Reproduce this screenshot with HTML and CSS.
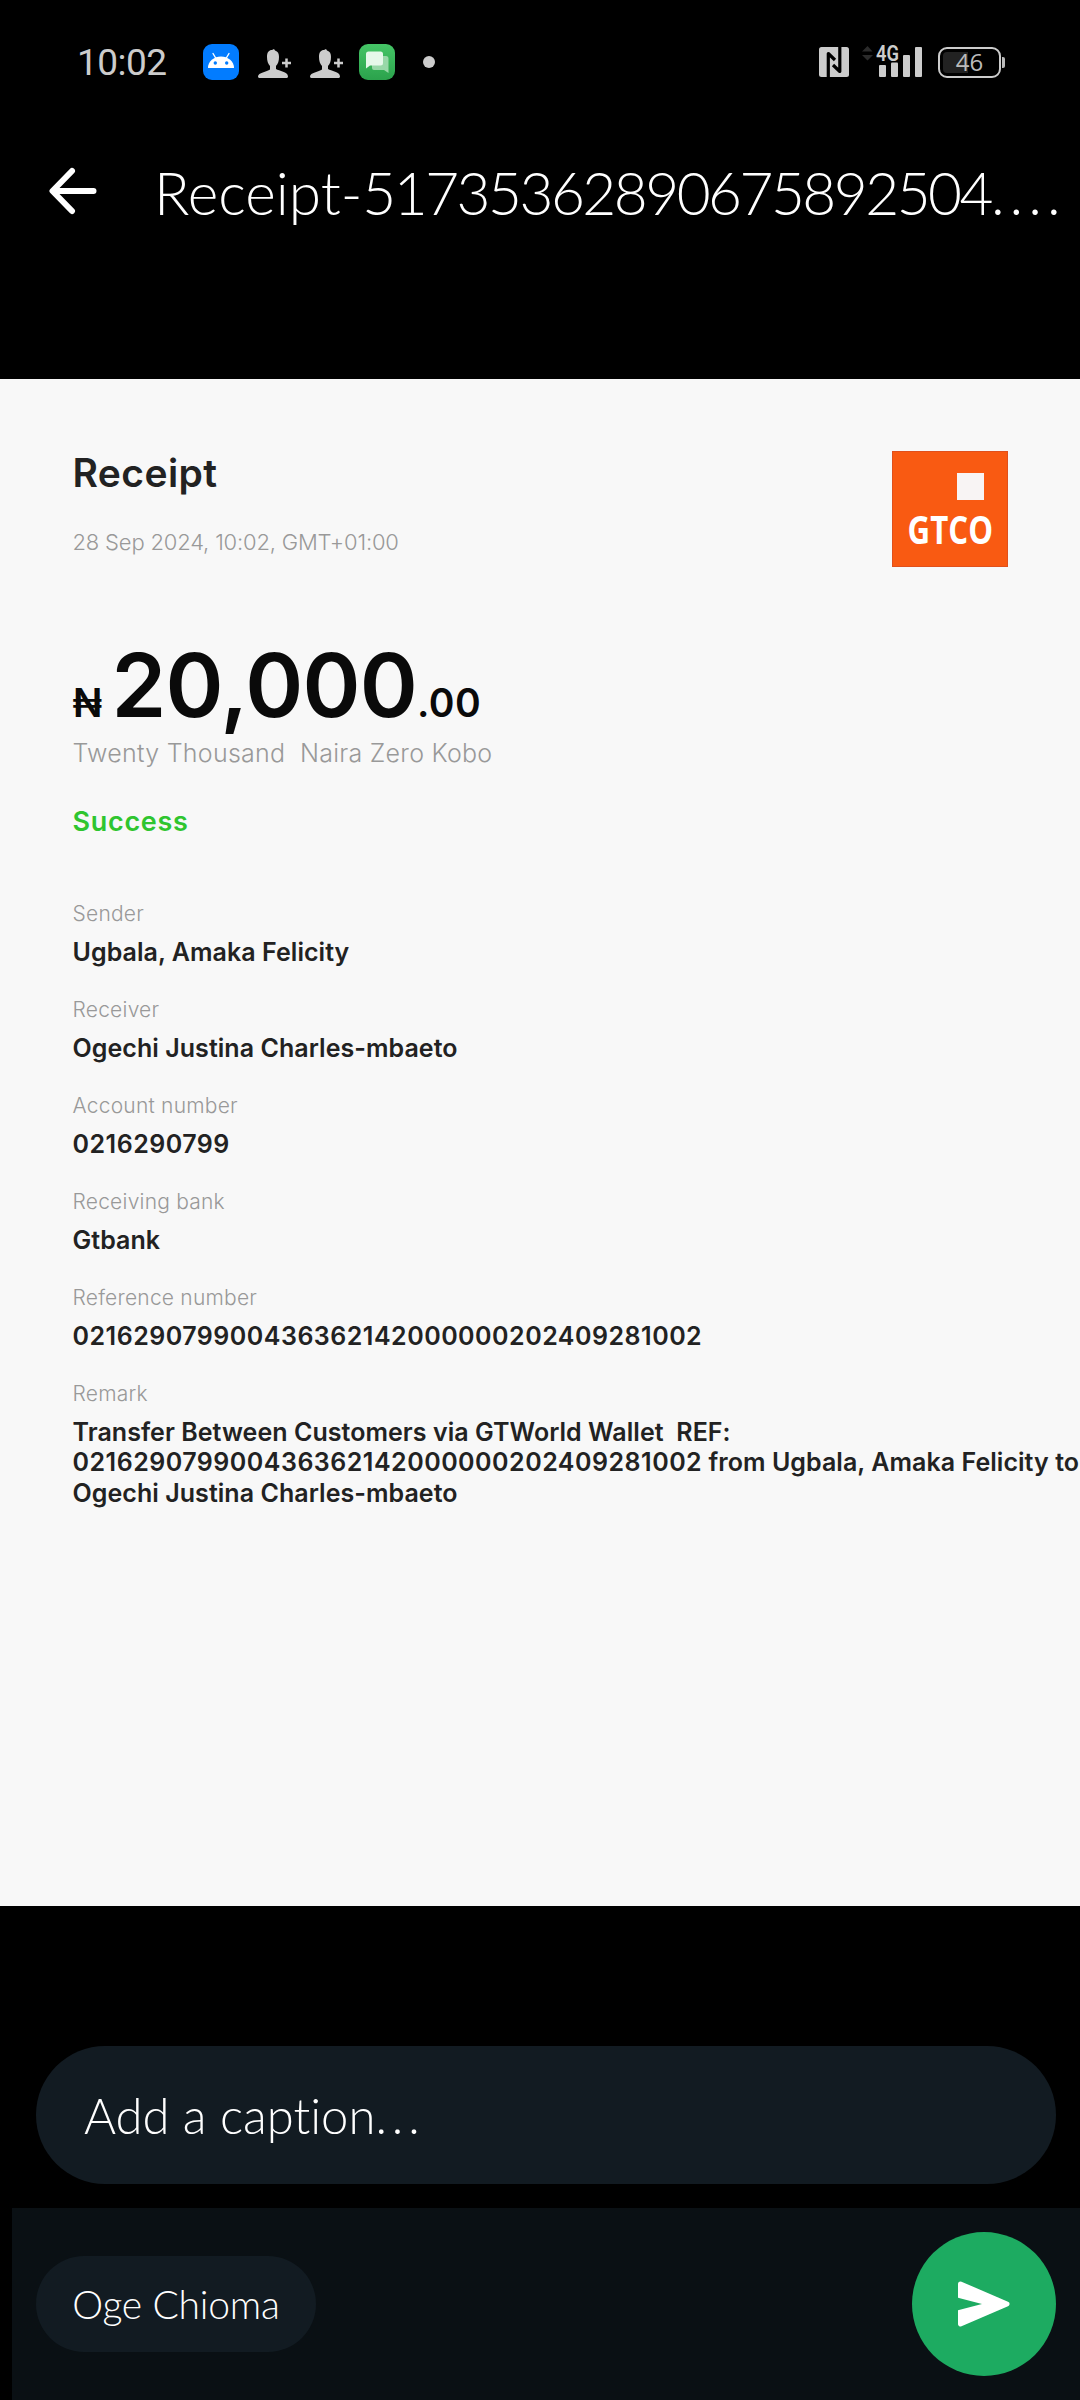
FILE: index.html
```html
<!DOCTYPE html>
<html lang="en">
<head>
    <meta charset="UTF-8">
    <meta name="viewport" content="width=device-width, initial-scale=1.0">
    <title>Receipt</title>
    <link rel="stylesheet" href="styles.css">
</head>
<body>

<div class="status-bar">
    <span class="time">10:02</span>
    <svg class="app-icon" width="36" height="36" viewBox="0 0 36 36">
        <rect width="36" height="36" rx="9" fill="#027cff"/>
        <path d="M10 9.500l3 5M26 9.500l-3 5" stroke="#fff" stroke-width="1.400" stroke-linecap="round"/>
        <path d="M5 24a13 11.500 0 0 1 26 0z" fill="#fff"/>
        <circle cx="12.300" cy="19" r="1.700" fill="#027cff"/>
        <circle cx="23.700" cy="19" r="1.700" fill="#027cff"/>
    </svg>
    <svg class="contact" width="34" height="36" viewBox="0 0 34 36">
        <path d="M9 13c0-5 2-7 5-7l2-1 1 1.500c3 1 4 3 4 6.500 0 4-1 7-3 9v3c3 2 12 2.500 12 7.500 0 1-1 1.500-2 1.500H2c-1 0-2-.5-2-1.500C0 28.500 9 28 12 25.500V22c-2-2-3-5-3-9z" fill="#ccc"/>
        <path d="M28.500 14.500v9M24 19h9" stroke="#ccc" stroke-width="2.500"/>
    </svg>
    <svg class="contact second" width="34" height="36" viewBox="0 0 34 36">
        <path d="M9 13c0-5 2-7 5-7l2-1 1 1.500c3 1 4 3 4 6.500 0 4-1 7-3 9v3c3 2 12 2.500 12 7.500 0 1-1 1.500-2 1.500H2c-1 0-2-.5-2-1.500C0 28.500 9 28 12 25.500V22c-2-2-3-5-3-9z" fill="#ccc"/>
        <path d="M28.500 14.500v9M24 19h9" stroke="#ccc" stroke-width="2.500"/>
    </svg>
    <svg class="messages" width="36" height="36" viewBox="0 0 36 36">
        <defs>
            <linearGradient id="green" x1="0" y1="0" x2="0" y2="1">
                <stop offset="0" stop-color="#45c566"/>
                <stop offset="1" stop-color="#2ba24c"/>
            </linearGradient>
        </defs>
        <rect width="36" height="36" rx="9" fill="url(#green)"/>
        <path d="M15 12h12a2.500 2.500 0 0 1 2.500 2.500V29L25 26H15a2 2 0 0 1-2-2V14a2 2 0 0 1 2-2z" fill="#98d8a8"/>
        <path d="M9.500 7.500h12a2.500 2.500 0 0 1 2.500 2.500v9a2.500 2.500 0 0 1-2.500 2.500H11L7 24.500V10a2.500 2.500 0 0 1 2.500-2.500z" fill="#e6f8ea"/>
    </svg>
    <span class="dot"></span>

    <svg class="nfc" width="30" height="30" viewBox="0 0 30 30">
        <rect width="30" height="30" rx="2.500" fill="#ccc"/>
        <path d="M9.300 31V6.500L16 13M20.800-1V24.500L14 18" stroke="#000" stroke-width="3.200" fill="none" stroke-linejoin="round"/>
    </svg>
    <svg class="signal" width="62" height="36" viewBox="0 0 62 36">
        <path d="M1 7.500L6.500 2l5 5.500zM1 11l5.500 5.500L12 11z" fill="#2b2b2b"/>
        <g fill="#ccc">
            <rect x="18" y="21" width="7" height="12" rx="1"/>
            <rect x="30" y="18.500" width="7" height="14.500" rx="1"/>
            <rect x="42" y="11" width="7" height="22" rx="1"/>
            <rect x="54" y="3" width="7" height="30" rx="1"/>
            <text class="network" x="15" y="16.500" textLength="23" lengthAdjust="spacingAndGlyphs">4G</text>
        </g>
    </svg>
    <div class="battery"><div class="battery-level">46</div></div>
    <span class="battery-tip"></span>
</div>

<div class="header">
    <svg width="48" height="48" viewBox="0 0 48 48">
        <path d="M23 4L3.500 24L23 44M4 24H44.500" stroke="#fff" stroke-width="6" fill="none" stroke-linecap="round" stroke-linejoin="round"/>
    </svg>
    <div class="file-name">Receipt-<span class="digits">51735362890675892504</span><span class="dots">....</span></div>
</div>

<div class="receipt">
    <div class="logo">
        <div class="logo-square"></div>
        <div class="logo-text">GTCO</div>
    </div>
    <h2>Receipt</h2>
    <div class="date">28 Sep 2024, 10:02, GMT+01:00</div>

    <div class="amount">
        <span class="naira">₦</span><span class="whole">20,000</span><span class="kobo">.00</span>
    </div>
    <div class="words">Twenty Thousand&nbsp; Naira Zero Kobo</div>
    <div class="status">Success</div>

    <div class="details">
        <label>Sender</label>
        <p>Ugbala, Amaka Felicity</p>
        <label>Receiver</label>
        <p>Ogechi Justina Charles-mbaeto</p>
        <label>Account number</label>
        <p class="number">0216290799</p>
        <label>Receiving bank</label>
        <p>Gtbank</p>
        <label>Reference number</label>
        <p class="number">021629079900436362142000000202409281002</p>
        <label>Remark</label>
        <p>Transfer Between Customers via GTWorld Wallet&nbsp; REF:<br>
        <span class="number">021629079900436362142000000202409281002</span> from Ugbala, Amaka Felicity to<br>
        Ogechi Justina Charles-mbaeto</p>
    </div>
</div>

<div class="caption">Add a caption<span>...</span></div>

<div class="footer">
    <div class="chip">Oge Chioma</div>
    <div class="send">
        <svg width="54" height="48" viewBox="0 0 54 48">
            <path d="M3.500 4L50 24L3.500 44V30.500L27 24L3.500 17.500z" fill="#fff" stroke="#fff" stroke-width="5" stroke-linejoin="round"/>
            <path d="M0 17.500L25 24L0 30.500z" fill="#1dab61"/>
        </svg>
    </div>
</div>

</body>
</html>
```

FILE: styles.css
```css
body {
    margin: 0;
    width: 1080px;
    height: 2400px;
    overflow: hidden;
    background-color: #000;
    font-family: Lato, sans-serif;
    font-variant-ligatures: none;
    color: white;
}

/* status bar */
.status-bar {
    display: flex;
    align-items: center;
    height: 124px;
}
.time {
    width: 126px;
    padding-left: 77px;
    font-family: Roboto, sans-serif;
    font-size: 37px;
    letter-spacing: -0.5px;
    color: #ccc;
}
.contact {
    margin-left: 19px;
}
.contact.second {
    margin-left: 18px;
}
.messages {
    margin-left: 15px;
}
.dot {
    width: 12px;
    height: 12px;
    margin-left: 28px;
    border-radius: 50%;
    background: #ccc;
}
.nfc {
    margin-left: auto;
}
.signal {
    margin-left: 12px;
    overflow: visible;
}
.network {
    font-family: Roboto, sans-serif;
    font-size: 22px;
    font-weight: 600;
}
.battery {
    box-sizing: border-box;
    width: 63px;
    height: 31px;
    margin-left: 15px;
    padding: 3px;
    border: 2px solid #ccc;
    border-radius: 9px;
}
.battery-level {
    height: 21px;
    border-radius: 4px;
    background: linear-gradient(90deg, #222 25px, transparent 25px);
    font-family: "Open Sans", sans-serif;
    font-size: 24px;
    line-height: 20px;
    text-align: center;
    color: #bbb;
}
.battery-tip {
    width: 3px;
    height: 11px;
    margin: 0 75px 0 1px;
    border-radius: 0 2px 2px 0;
    background: #bbb;
}

/* top bar */
.header {
    display: flex;
    align-items: center;
    height: 139px;
    padding-left: 49px;
}
.header svg {
    margin-bottom: 5px;
}
.file-name {
    margin: 0 0 3px 57px;
    font-size: 58.500px;
    font-weight: 300;
    line-height: 70px;
    white-space: nowrap;
}
.digits {
    letter-spacing: -2.500px;
}
.dots {
    letter-spacing: 5px;
}

/* receipt preview */
.receipt {
    position: relative;
    box-sizing: border-box;
    height: 1527px;
    margin-top: 116px;
    padding: 69px 0 0 72.500px;
    overflow: hidden;
    background: #f8f8f8;
    font-family: Inter, sans-serif;
    color: #222;
}
.logo {
    position: absolute;
    top: 72px;
    left: 892px;
    width: 116px;
    height: 116px;
    background: #f95a12;
    box-shadow: inset 0 0 0 1px #e0501c;
}
.logo-square {
    width: 27px;
    height: 27px;
    margin: 22px 0 0 65px;
    background: #f8f4f4;
}
.logo-text {
    margin-top: 7px;
    font-family: "Open Sans", sans-serif;
    font-size: 39px;
    font-weight: 700;
    line-height: 44px;
    color: white;
    transform: scaleX(0.8);
    transform-origin: 18px 0;
    padding-left: 15px;
}
.receipt h2 {
    margin: 0;
    font-size: 39px;
    font-weight: 600;
    line-height: 50px;
    letter-spacing: 0.4px;
}
.date {
    margin-top: 29px;
    font-size: 22px;
    font-weight: 300;
    line-height: 30px;
    letter-spacing: -0.18px;
    color: #999;
}
.amount {
    display: flex;
    align-items: baseline;
    height: 90px;
    margin-top: 83px;
    font-size: 39px;
    font-weight: 600;
    line-height: 90px;
    color: #0a0a0a;
}
.naira {
    width: 39px;
}
.whole {
    font-size: 88px;
    letter-spacing: -0.8px;
}
.kobo {
    letter-spacing: 0.5px;
}
.words {
    margin-top: 8px;
    font-size: 25px;
    font-weight: 300;
    line-height: 30px;
    letter-spacing: 0.26px;
    color: #999;
}
.status {
    margin-top: 39px;
    font-size: 27px;
    font-weight: 600;
    line-height: 30px;
    letter-spacing: 0.7px;
    color: #2fc52f;
}
.details {
    margin-top: 62px;
    white-space: nowrap;
}
.details label {
    display: block;
    font-size: 21px;
    font-weight: 300;
    line-height: 30px;
    letter-spacing: 0.22px;
    color: #999;
}
.details p {
    margin: 7.500px 0 28px;
    font-size: 25px;
    font-weight: 600;
    line-height: 30.500px;
    letter-spacing: 0.05px;
}
.details .number {
    letter-spacing: 0.5px;
}

/* bottom area */
.caption {
    height: 138px;
    margin: 140px 24px 24px 36px;
    padding-left: 48px;
    border-radius: 69px;
    background: #121b22;
    font-size: 49px;
    font-weight: 300;
    line-height: 139px;
}
.caption span {
    letter-spacing: 5px;
}
.footer {
    display: flex;
    align-items: center;
    justify-content: space-between;
    height: 192px;
    margin-left: 12px;
    padding: 0 24px;
    background: #0a1014;
}
.chip {
    width: 280px;
    height: 96px;
    border-radius: 48px;
    background: #121b22;
    font-size: 39px;
    font-weight: 300;
    line-height: 96px;
    letter-spacing: -0.2px;
    text-align: center;
}
.send {
    display: flex;
    align-items: center;
    justify-content: center;
    width: 144px;
    height: 144px;
    border-radius: 50%;
    background: #1dab61;
}
```
